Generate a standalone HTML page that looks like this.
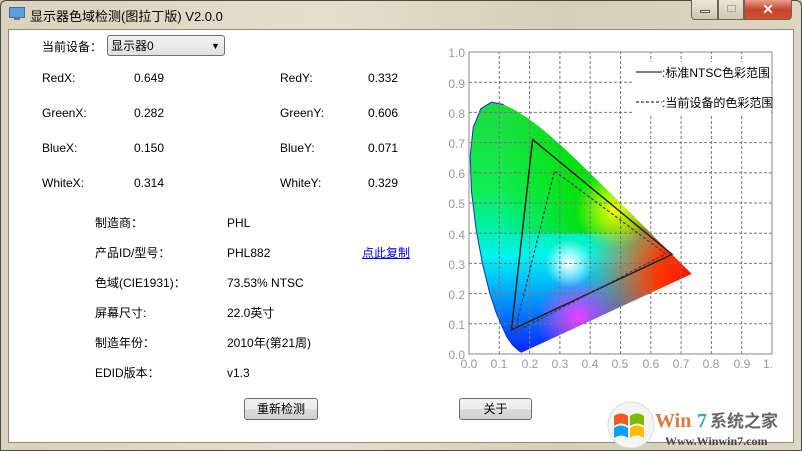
<!DOCTYPE html>
<html><head><meta charset="utf-8"><style>
*{margin:0;padding:0;box-sizing:border-box}
body{width:802px;height:451px;overflow:hidden;background:#cfc6ad;font-family:"Liberation Sans","Noto Sans CJK SC",sans-serif;font-size:12px;color:#000;position:relative}
.frame{position:absolute;left:0;top:0;width:802px;height:451px;border:1px solid #4a4a44;border-radius:6px 6px 0 0;background:linear-gradient(90deg,#d9d2bc 0%,#e4dfcc 40%,#d6cfb7 70%,#ddd6c2 100%)}
.title{position:absolute;left:30px;top:6px;font-size:13px;color:#000}
.client{position:absolute;left:8px;top:29px;width:786px;height:414px;background:#fff;border:1px solid #8e8a7c}
.t{position:absolute;white-space:nowrap;line-height:14px}
.btn{position:absolute;height:22px;border:1px solid #707070;border-radius:3px;background:linear-gradient(#f2f2f2 0%,#ebebeb 50%,#dddddd 51%,#cfcfcf 100%);text-align:center;line-height:20px}
.wb{position:absolute;top:0;height:20px;border:1px solid #6a6558;border-top:none}
</style></head><body>
<div class="frame"></div>
<svg style="position:absolute;left:9px;top:7px" width="16" height="14"><rect x="0.5" y="0.5" width="15" height="10" fill="#5aa0e0" stroke="#3a6ea8"/><rect x="5" y="11" width="6" height="2" fill="#777"/></svg>
<div class="title">显示器色域检测(图拉丁版) V2.0.0</div>
<div class="wb" style="left:691px;width:27px;border-radius:0 0 0 4px;background:linear-gradient(#ebe6d8,#cfc7ae)"><div style="position:absolute;left:8px;top:10px;width:10px;height:3px;background:#fff;border:1px solid #555"></div></div>
<div class="wb" style="left:718px;width:26px;background:linear-gradient(#ebe6d8,#cfc7ae)"><div style="position:absolute;left:8px;top:5px;width:9px;height:7px;border:1px solid #aaa"></div></div>
<div class="wb" style="left:744px;width:48px;border-radius:0 0 4px 0;background:linear-gradient(#e8a08c,#c8432a 50%,#d0502e)"><div style="position:absolute;left:0;width:100%;top:1px;text-align:center;color:#fff;font-weight:bold;font-size:14px">✕</div></div>
<div class="client"></div>
<div class="t" style="left:42px;top:40px">当前设备：</div>
<div style="position:absolute;left:107px;top:35px;width:118px;height:21px;border:1px solid #707070;border-radius:3px;background:linear-gradient(#f2f2f2,#e0e0e0)"><span class="t" style="left:3px;top:3px">显示器0</span><span class="t" style="left:103px;top:3px;font-size:9px">▼</span></div>
<div class="t" style="left:42px;top:71px">RedX:</div><div class="t" style="left:134px;top:71px">0.649</div>
<div class="t" style="left:280px;top:71px">RedY:</div><div class="t" style="left:368px;top:71px">0.332</div>
<div class="t" style="left:42px;top:106px">GreenX:</div><div class="t" style="left:134px;top:106px">0.282</div>
<div class="t" style="left:280px;top:106px">GreenY:</div><div class="t" style="left:368px;top:106px">0.606</div>
<div class="t" style="left:42px;top:141px">BlueX:</div><div class="t" style="left:134px;top:141px">0.150</div>
<div class="t" style="left:280px;top:141px">BlueY:</div><div class="t" style="left:368px;top:141px">0.071</div>
<div class="t" style="left:42px;top:176px">WhiteX:</div><div class="t" style="left:134px;top:176px">0.314</div>
<div class="t" style="left:280px;top:176px">WhiteY:</div><div class="t" style="left:368px;top:176px">0.329</div>
<div class="t" style="left:95px;top:216px">制造商：</div><div class="t" style="left:227px;top:216px">PHL</div>
<div class="t" style="left:95px;top:246px">产品ID/型号：</div><div class="t" style="left:227px;top:246px">PHL882</div>
<div class="t" style="left:362px;top:246px;color:#0000ee;text-decoration:underline">点此复制</div>
<div class="t" style="left:95px;top:276px">色域(CIE1931)：</div><div class="t" style="left:227px;top:276px">73.53% NTSC</div>
<div class="t" style="left:95px;top:306px">屏幕尺寸:</div><div class="t" style="left:227px;top:306px">22.0英寸</div>
<div class="t" style="left:95px;top:336px">制造年份：</div><div class="t" style="left:227px;top:336px">2010年(第21周)</div>
<div class="t" style="left:95px;top:366px">EDID版本：</div><div class="t" style="left:227px;top:366px">v1.3</div>
<div class="btn" style="left:244px;top:398px;width:74px">重新检测</div>
<div class="btn" style="left:459px;top:398px;width:73px">关于</div>

<svg style="position:absolute;left:0;top:0" width="802" height="451">
<defs>
<clipPath id="loc"><polygon points="0.1741,0.005 0.1644,0.0109 0.144,0.0297 0.1241,0.0578 0.0913,0.1327 0.0687,0.2007 0.0454,0.295 0.0235,0.4127 0.0082,0.5384 0.0039,0.6548 0.0139,0.7502 0.0389,0.812 0.0743,0.8338 0.1142,0.8262 0.1547,0.8059 0.1929,0.7816 0.2296,0.7543 0.2658,0.7243 0.3016,0.6923 0.3373,0.6589 0.3731,0.6245 0.4087,0.5896 0.4441,0.5547 0.4788,0.5202 0.5125,0.4866 0.5448,0.4544 0.5752,0.4242 0.6029,0.3965 0.627,0.3725 0.6482,0.3514 0.6658,0.334 0.6801,0.3197 0.6915,0.3083 0.7006,0.2993 0.7347,0.2653"/></clipPath>
<linearGradient id="g1" gradientUnits="userSpaceOnUse" x1="0" y1="0.85" x2="0" y2="0">
<stop offset="0" stop-color="#20d840"/><stop offset="0.35" stop-color="#10ee50"/><stop offset="0.5" stop-color="#00f0a0"/><stop offset="0.62" stop-color="#00f4f0"/><stop offset="0.8" stop-color="#0090ff"/><stop offset="1" stop-color="#1020ff"/></linearGradient>
<linearGradient id="g0" gradientUnits="userSpaceOnUse" x1="0.1" y1="0" x2="0.35" y2="0"><stop offset="0" stop-color="#00e000" stop-opacity="0"/><stop offset="1" stop-color="#00e000" stop-opacity="0.85"/></linearGradient>
<radialGradient id="gw" gradientUnits="userSpaceOnUse" cx="0.33" cy="0.3" r="0.08"><stop offset="0" stop-color="#fff"/><stop offset="1" stop-color="#fff" stop-opacity="0"/></radialGradient>
<radialGradient id="gy" gradientUnits="userSpaceOnUse" cx="0.48" cy="0.48" r="0.13"><stop offset="0" stop-color="#f8ff00"/><stop offset="1" stop-color="#f8ff00" stop-opacity="0"/></radialGradient>
<radialGradient id="gr" gradientUnits="userSpaceOnUse" cx="0.74" cy="0.26" r="0.36"><stop offset="0" stop-color="#ff1000"/><stop offset="0.35" stop-color="#ff3a00"/><stop offset="1" stop-color="#ff7000" stop-opacity="0"/></radialGradient>
<radialGradient id="gm" gradientUnits="userSpaceOnUse" cx="0.36" cy="0.12" r="0.14"><stop offset="0" stop-color="#f040ff"/><stop offset="1" stop-color="#f040ff" stop-opacity="0"/></radialGradient>
</defs>
<g transform="translate(469,354) scale(303,-302)">
<g clip-path="url(#loc)">
<rect x="0" y="0" width="0.8" height="0.9" fill="url(#g1)"/>
<rect x="0" y="0.4" width="0.8" height="0.5" fill="url(#g0)"/>
<rect x="0" y="0" width="0.8" height="0.9" fill="url(#gm)"/>
<rect x="0" y="0" width="0.8" height="0.9" fill="url(#gr)"/>
<rect x="0" y="0" width="0.8" height="0.9" fill="url(#gy)"/>
<rect x="0" y="0" width="0.8" height="0.9" fill="url(#gw)"/>
</g>
<polyline points="0.1741,0.005 0.1644,0.0109 0.144,0.0297 0.1241,0.0578 0.0913,0.1327 0.0687,0.2007 0.0454,0.295 0.0235,0.4127 0.0082,0.5384 0.0039,0.6548 0.0139,0.7502 0.0389,0.812 0.0743,0.8338 0.1142,0.8262" fill="none" stroke="#1030c0" stroke-width="1" vector-effect="non-scaling-stroke"/>
<path d="M0.1,0V1M0.2,0V1M0.3,0V1M0.4,0V1M0.5,0V1M0.6,0V1M0.7,0V1M0.8,0V1M0.9,0V1M0,0.1H1M0,0.2H1M0,0.3H1M0,0.4H1M0,0.5H1M0,0.6H1M0,0.7H1M0,0.8H1M0,0.9H1" stroke="#777" stroke-width="1" stroke-dasharray="3,2" fill="none" vector-effect="non-scaling-stroke"/>
<rect x="0" y="0" width="1" height="1" fill="none" stroke="#888" vector-effect="non-scaling-stroke"/>
<polygon points="0.67,0.33 0.21,0.71 0.14,0.08" fill="none" stroke="#222" stroke-width="1.5" vector-effect="non-scaling-stroke"/>
<polygon points="0.649,0.332 0.282,0.606 0.15,0.071" fill="none" stroke="#553355" stroke-width="1.2" stroke-dasharray="3,2" vector-effect="non-scaling-stroke"/>
</g>
<g font-size="12" fill="#999" font-family="Liberation Sans,sans-serif">
<text x="465" y="359" text-anchor="end">0.0</text><text x="465" y="329" text-anchor="end">0.1</text><text x="465" y="299" text-anchor="end">0.2</text><text x="465" y="269" text-anchor="end">0.3</text><text x="465" y="239" text-anchor="end">0.4</text><text x="465" y="208" text-anchor="end">0.5</text><text x="465" y="178" text-anchor="end">0.6</text><text x="465" y="148" text-anchor="end">0.7</text><text x="465" y="118" text-anchor="end">0.8</text><text x="465" y="88" text-anchor="end">0.9</text><text x="465" y="57" text-anchor="end">1.0</text>
<text x="469" y="368" text-anchor="middle">0.0</text><text x="499" y="368" text-anchor="middle">0.1</text><text x="530" y="368" text-anchor="middle">0.2</text><text x="560" y="368" text-anchor="middle">0.3</text><text x="590" y="368" text-anchor="middle">0.4</text><text x="620" y="368" text-anchor="middle">0.5</text><text x="651" y="368" text-anchor="middle">0.6</text><text x="681" y="368" text-anchor="middle">0.7</text><text x="711" y="368" text-anchor="middle">0.8</text><text x="742" y="368" text-anchor="middle">0.9</text><text x="768" y="368" text-anchor="middle">1.</text>
</g>
<rect x="634" y="62" width="137" height="52" fill="#fff"/>
<line x1="636" y1="72" x2="662" y2="72" stroke="#000"/>
<line x1="636" y1="102" x2="662" y2="102" stroke="#000" stroke-dasharray="3,2"/>
<text x="662" y="77" font-size="12" fill="#000">:标准NTSC色彩范围</text>
<text x="662" y="107" font-size="12" fill="#000">:当前设备的色彩范围</text>
<circle cx="631" cy="425" r="23" fill="#f4f4f4" stroke="#ddd"/>
<path d="M614 416 q7-5 14 0 v10 q-7-5-14 0z" fill="#f05a28"/><path d="M630 416 q7-5 14 0 v10 q-7-5-14 0z" fill="#7cbb00"/>
<path d="M614 428 q7-5 14 0 v10 q-7-5-14 0z" fill="#00a1f1"/><path d="M630 428 q7-5 14 0 v10 q-7-5-14 0z" fill="#ffbb00"/>
<text x="655" y="427" font-size="20" font-weight="bold" fill="#e07840" font-family="Liberation Serif,serif">Win</text>
<text x="697" y="427" font-size="20" font-weight="bold" fill="#3aa0d8" font-family="Liberation Serif,serif">7</text>
<text x="710" y="427" font-size="17" font-weight="bold" fill="#666" font-family="Noto Sans CJK SC,sans-serif">系统之家</text>
<text x="665" y="445" font-size="12" font-weight="bold" fill="#444" font-family="Liberation Serif,serif">Www.Winwin7.com</text>
</svg>
</body></html>
